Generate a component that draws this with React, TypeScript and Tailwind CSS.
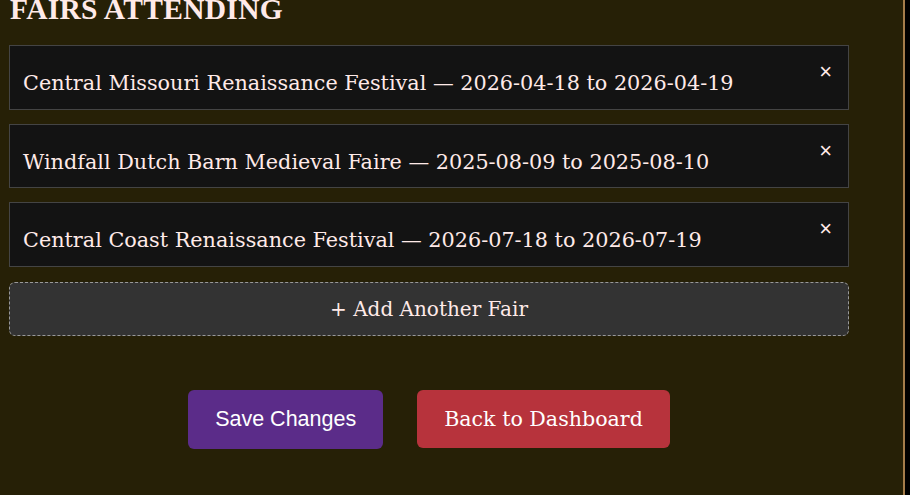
const fairs = [
  { id: 1, name: "Central Missouri Renaissance Festival", start: "2026-04-18", end: "2026-04-19" },
  { id: 2, name: "Windfall Dutch Barn Medieval Faire", start: "2025-08-09", end: "2025-08-10" },
  { id: 3, name: "Central Coast Renaissance Festival", start: "2026-07-18", end: "2026-07-19" },
];

export default function App() {
  return (
    <div className="w-[910px] h-[495px] overflow-hidden bg-black flex">
      <div className="w-[905px] h-full bg-[#262006] border-r-2 border-[#a47c4a] pl-[9px] pr-[54px] text-[#ffeae8]">
        {/* HEADING */}
        <h2 className="-mt-[8px] pl-[1px] text-[29.5px] leading-[34px] font-bold uppercase tracking-[0.01em] [font-family:'Liberation_Serif',serif]">
          Fairs Attending
        </h2>

        {/* FAIR LIST */}
        <div className="mt-[19px] flex flex-col gap-[14px] [font-family:'DejaVu_Serif',serif]">
          {fairs.map((fair) => (
            <div
              key={fair.id}
              className="relative h-[64.5px] bg-[#131313] border border-[#444444] pl-[13px] pt-[23px] text-[20.75px] leading-[28px]"
            >
              <span>
                {fair.name} — {fair.start} to {fair.end}
              </span>
              <button className="absolute top-[15px] right-[16px] text-[#ffeae8] [font-family:'Liberation_Sans',sans-serif] text-[22px] leading-[22px]">
                ×
              </button>
            </div>
          ))}

          <button className="mt-[1px] h-[54px] w-full rounded-md bg-[#333333] border border-dashed border-[#999999] text-[20px] text-[#ffeae8] [font-family:'DejaVu_Serif',serif]">
            + Add Another Fair
          </button>
        </div>

        {/* ACTIONS */}
        <div className="mt-[54px] flex justify-center gap-[34px]">
          <button className="h-[59px] px-[27px] rounded-md bg-[#5b2c89] text-white text-[21.5px] [font-family:'Liberation_Sans',sans-serif]">
            Save Changes
          </button>
          <button className="h-[58px] px-[27px] pt-[2px] rounded-md bg-[#b7333c] text-white text-[20.6px] [font-family:'DejaVu_Serif',serif]">
            Back to Dashboard
          </button>
        </div>
      </div>
    </div>
  );
}
